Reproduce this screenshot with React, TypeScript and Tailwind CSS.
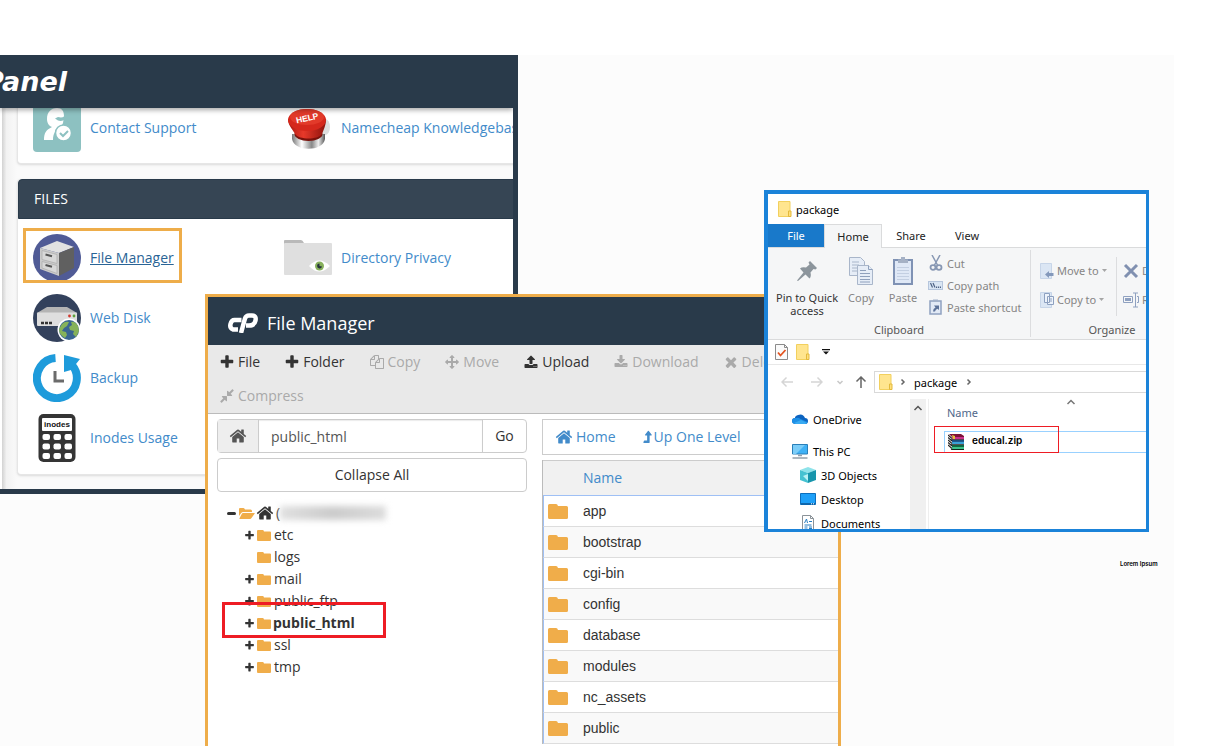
import React from "react";

const FA = {
  home: "M1472 992v480q0 26-19 45t-45 19h-384v-384h-256v384h-384q-26 0-45-19t-19-45v-480q0-1 .5-3t.5-3l575-474 575 474q1 2 1 6zm223-69l-62 74q-8 9-21 11h-3q-13 0-21-7l-692-577-692 577q-12 8-24 7-13-2-21-11l-62-74q-8-10-7-23.5t11-21.5l719-599q32-26 76-26t76 26l244 204v-195q0-14 9-23t23-9h192q14 0 23 9t9 23v408l219 182q10 8 11 21.5t-7 23.5z",
  plus: "M1600 736v192q0 40-28 68t-68 28h-416v416q0 40-28 68t-68 28h-192q-40 0-68-28t-28-68v-416h-416q-40 0-68-28t-28-68v-192q0-40 28-68t68-28h416v-416q0-40 28-68t68-28h192q40 0 68 28t28 68v416h416q40 0 68 28t28 68z",
  copy: "M1696 384q40 0 68 28t28 68v1216q0 40-28 68t-68 28h-960q-40 0-68-28t-28-68v-288h-544q-40 0-68-28t-28-68v-672q0-40 20-88t48-76l408-408q28-28 76-48t88-20h416q40 0 68 28t28 68v328q68-40 128-40h416zm-544 213l-299 299h299v-299zm-640-384l-299 299h299v-299zm196 647l316-316v-416h-384v416q0 40-28 68t-68 28h-416v640h512v-256q0-40 20-88t48-76zm956 804v-1152h-384v416q0 40-28 68t-68 28h-416v640h896z",
  move: "M1792 896q0 26-19 45l-256 256q-19 19-45 19t-45-19-19-45v-128h-384v384h128q26 0 45 19t19 45-19 45l-256 256q-19 19-45 19t-45-19l-256-256q-19-19-19-45t19-45 45-19h128v-384h-384v128q0 26-19 45t-45 19-45-19l-256-256q-19-19-19-45t19-45l256-256q19-19 45-19t45 19 19 45v128h384v-384h-128q-26 0-45-19t-19-45 19-45l256-256q19-19 45-19t45 19l256 256q19 19 19 45t-19 45-45 19h-128v384h384v-128q0-26 19-45t45-19 45 19l256 256q19 19 19 45z",
  upload: "M1344 1472q0-26-19-45t-45-19-45 19-19 45 19 45 45 19 45-19 19-45zm256 0q0-26-19-45t-45-19-45 19-19 45 19 45 45 19 45-19 19-45zm128-224v320q0 40-28 68t-68 28h-1472q-40 0-68-28t-28-68v-320q0-40 28-68t68-28h427q21 56 70.5 92t110.5 36h256q61 0 110.5-36t70.5-92h427q40 0 68 28t28 68zm-325-648q-17 40-59 40h-256v448q0 26-19 45t-45 19h-256q-26 0-45-19t-19-45v-448h-256q-42 0-59-40-17-39 14-69l448-448q18-19 45-19t45 19l448 448q31 30 14 69z",
  download: "M1344 1344q0-26-19-45t-45-19-45 19-19 45 19 45 45 19 45-19 19-45zm256 0q0-26-19-45t-45-19-45 19-19 45 19 45 45 19 45-19 19-45zm128-224v320q0 40-28 68t-68 28h-1472q-40 0-68-28t-28-68v-320q0-40 28-68t68-28h465l135 136q58 56 136 56t136-56l136-136h464q40 0 68 28t28 68zm-325-569q17 41-14 70l-448 448q-18 19-45 19t-45-19l-448-448q-31-29-14-70 17-39 59-39h256v-448q0-26 19-45t45-19h256q26 0 45 19t19 45v448h256q42 0 59 39z",
  times: "M1490 1322q0 40-28 68l-136 136q-28 28-68 28t-68-28l-294-294-294 294q-28 28-68 28t-68-28l-136-136q-28-28-28-68t28-68l294-294-294-294q-28-28-28-68t28-68l136-136q28-28 68-28t68 28l294 294 294-294q28-28 68-28t68 28l136 136q28 28 28 68t-28 68l-294 294 294 294q28 28 28 68z",
  compress: "M896 960v448q0 26-19 45t-45 19-45-19l-144-144-332 332q-10 10-23 10t-23-10l-114-114q-10-10-10-23t10-23l332-332-144-144q-19-19-19-45t19-45 45-19h448q26 0 45 19t19 45zm755-672q0 13-10 23l-332 332 144 144q19 19 19 45t-19 45-45 19h-448q-26 0-45-19t-19-45v-448q0-26 19-45t45-19 45 19l144 144 332-332q10-10 23-10t23 10l114 114q10 10 10 23z",
  up: "M560 1664h560q112 0 112-112V704h190q50 0 72-46 20-44-12-80L1130 130q-24-30-58-30t-58 30L662 578q-32 36-12 80 22 46 72 46h190v640H560q-20 0-32 18l-110 200q-12 40 24 84 40 18 118 18z",
};

function Fa({ d, className }: { d: string; className: string }) {
  return (
    <svg viewBox="0 0 1792 1792" fill="currentColor" className={"shrink-0 " + className} aria-hidden="true">
      <path d={d} />
    </svg>
  );
}

function FolderShape({ className }: { className: string }) {
  return (
    <svg viewBox="0 0 20 15" preserveAspectRatio="none" className={"shrink-0 text-[#f0ad4a] " + className} aria-hidden="true">
      <path fill="currentColor" d="M1.500 0H8Q9.500 0 10 2H18.500Q20 2 20 3.500V13.500Q20 15 18.500 15H1.500Q0 15 0 13.500V1.500Q0 0 1.500 0Z" />
    </svg>
  );
}

/* ---------- cPanel home icons ---------- */

const SupportIcon = () => (
  <svg viewBox="0 0 48 48" className="size-12 shrink-0">
    <rect width="48" height="48" rx="4" fill="#8dc1c1" />
    <path fill="#fff" d="M14 15C14 8 18 4 24 4c5 0 7 3 7 8l-1 7c-1 3-3 4-5 4-2 4-5 6-5 13h-9c0-7 2-10 8-13-3-1-5-4-5-8z" />
    <path d="M22 14.500l3-1.500q4 1 6-.5v3.500q-3 1.500-6 .5z" fill="#8dc1c1" />
    <circle cx="30.500" cy="29" r="8" fill="#fff" stroke="#8dc1c1" strokeWidth="1.500" />
    <path d="M27 29l3 3 5-5" fill="none" stroke="#8dc1c1" strokeWidth="2" />
  </svg>
);

const HelpIcon = () => (
  <svg viewBox="0 0 48 48" className="size-12 shrink-0">
    <defs>
      <linearGradient id="chrome">
        <stop offset="0" stopColor="#777" />
        <stop offset=".3" stopColor="#fff" />
        <stop offset=".6" stopColor="#888" />
        <stop offset=".8" stopColor="#eee" />
        <stop offset="1" stopColor="#555" />
      </linearGradient>
      <linearGradient id="red">
        <stop offset="0" stopColor="#a81810" />
        <stop offset=".4" stopColor="#e8392a" />
        <stop offset="1" stopColor="#8c120c" />
      </linearGradient>
    </defs>
    <ellipse cx="41" cy="23" rx="5" ry="8" fill="#ddd" />
    <path d="M8 30v5c2 13 31 13 33 0v-5z" fill="url(#chrome)" />
    <ellipse cx="24.500" cy="30" rx="14" ry="7" fill="#7a120c" />
    <path d="M4 15c0 7 6 12 7 15 4 6 23 6 27 0 1-3 4-8 4-15z" fill="url(#red)" />
    <ellipse cx="23" cy="16" rx="19" ry="11" fill="#d5281c" />
    <ellipse cx="23" cy="13" rx="17" ry="8" fill="#e23a2a" />
    <text x="12" y="17" fontFamily="Liberation Sans" fontWeight="700" fontSize="8.500" fill="#fff" transform="rotate(-12 23 15)">HELP</text>
  </svg>
);

const CabinetIcon = () => (
  <svg viewBox="0 0 48 48" className="size-12 shrink-0">
    <circle cx="24" cy="24" r="24" fill="#505b96" />
    <path d="M7 14l17-7 17 6-15 6z" fill="#e2e2e2" />
    <path d="M7 14l19 5v23L7 35z" fill="#cbcbcb" />
    <path d="M26 19l15-6v21L26 42z" fill="#606060" />
    <path d="M9 16.500l15 4v9L9 25.500zM9 27.500l15 4v8L9 34z" fill="#d8d8d8" stroke="#aaa" strokeWidth=".7" />
    <path d="M12.500 20.500l6.500 1.800M12.500 31l6.500 1.800" stroke="#555" strokeWidth="2" />
  </svg>
);

const PrivacyIcon = () => (
  <svg viewBox="0 0 48 48" className="size-12 shrink-0">
    <path d="M0 9V7q0-1 1-1h16q1.500 0 3 3v4H0z" fill="#b9b9b9" />
    <rect y="9" width="48" height="32" rx="1" fill="#dfdfdf" />
    <path d="M25 32q10-11 21 0-11 11-21 0z" fill="#fff" />
    <circle cx="35.500" cy="32" r="4.500" fill="#87b05c" />
    <path d="M35.500 29.500a2.500 2.500 0 1 0 2.500 3l-2.500-.5z" fill="#26323c" />
  </svg>
);

const WebDiskIcon = () => (
  <svg viewBox="0 0 48 48" className="size-12 shrink-0">
    <circle cx="24" cy="24" r="24" fill="#33415c" />
    <path d="M14 13h20l10 6H4z" fill="#b4b4b4" />
    <rect x="4" y="18.500" width="40" height="13.500" rx="1" fill="#dedede" />
    <path d="M8 29h11" stroke="#333" strokeWidth="2.500" strokeDasharray="3 1" />
    <circle cx="36.500" cy="22" r="1.400" fill="#d23a30" />
    <circle cx="41" cy="22" r="1.400" fill="#5fa03a" />
    <circle cx="36" cy="36" r="11.500" fill="#fff" />
    <circle cx="36" cy="36" r="10" fill="#3a6592" />
    <path d="M29 30q3-3 7-2l-2 4-3 2-2 3 4 1 1 3-2 3q-6-3-6-9zM38 28q4-1 7 4l1 5-3 6-3-3 1-3-4-1-1-3 3-2z" fill="#86b259" />
  </svg>
);

const BackupIcon = () => (
  <svg viewBox="0 0 48 48" className="size-12 shrink-0">
    <path d="M22.500 4.100A20 20 0 1 0 39 11" fill="none" stroke="#1e9bdb" strokeWidth="8" />
    <path d="M31 1l16 4-4 5-2 1-3 5-7 2z" fill="#1e9bdb" />
    <path d="M22 17v10h9" fill="none" stroke="#6b6b6b" strokeWidth="3" />
  </svg>
);

const InodesIcon = () => (
  <svg viewBox="0 0 48 48" className="size-12 shrink-0">
    <rect x="5.500" width="37" height="48" rx="5" fill="#353535" />
    <rect x="9" y="4" width="30" height="13" rx="1" fill="#fff" />
    <text x="24" y="13" textAnchor="middle" fontFamily="Liberation Sans" fontWeight="700" fontSize="8" fill="#111">inodes</text>
    {[20, 29.500, 39].map((y) =>
      [9.500, 20.500, 31.500].map((x) => <rect key={x + "-" + y} x={x} y={y} width="7.500" height="6" rx="2" fill="#fff" />)
    )}
  </svg>
);

function Feature({ icon, label, active }: { icon: React.ReactNode; label: string; active?: boolean }) {
  return (
    <a
      href="#"
      className={"flex h-12 items-center gap-[9px] whitespace-nowrap text-sm " + (active ? "text-[#2a6496]" : "text-[#428bca]")}
    >
      {icon}
      <span className={active ? "underline" : ""}>{label}</span>
    </a>
  );
}

function CPanelWindow() {
  return (
    <section className="absolute left-0 top-[55px] flex h-[439px] w-[518px] flex-col overflow-hidden border-b-5 border-r-5 border-[#293a4a] bg-[#fafafa] font-['Open_Sans',sans-serif]">
      <header className="relative z-10 flex h-[53px] shrink-0 items-center bg-[#293a4a] shadow-[0_2px_5px_rgba(0,0,0,0.35)]">
        <span className="-ml-4 font-['DejaVu_Sans',sans-serif] text-[27px] font-bold italic leading-none text-white">Panel</span>
      </header>
      <div className="flex min-h-0 flex-1">
        <div className="h-full w-[17px] shrink-0 border-l-2 border-white bg-linear-to-r from-[#d2d2d2] via-[#f2f2f2] via-30% to-[#fafafa]" />
        <div className="flex flex-1 flex-col gap-[15px]">
          <div className="-mt-5 grid shrink-0 grid-cols-[251px_1fr] rounded-b border border-t-0 border-[#e6e6e6] bg-white px-[15px] pb-[11px] pt-4 shadow-sm">
            <Feature icon={<SupportIcon />} label="Contact Support" />
            <Feature icon={<HelpIcon />} label="Namecheap Knowledgebase" />
          </div>
          <div className="shrink-0 rounded border border-t-0 border-[#e6e6e6] bg-white shadow-sm">
            <h2 className="flex h-10 items-center rounded-t border border-[#293a4a] bg-[#364554] px-[15px] text-sm text-white">FILES</h2>
            <div className="grid grid-cols-[251px_1fr] gap-y-3 px-[15px] pb-3 pt-[15px]">
              <Feature icon={<CabinetIcon />} label="File Manager" active />
              <Feature icon={<PrivacyIcon />} label="Directory Privacy" />
              <div className="col-span-2"><Feature icon={<WebDiskIcon />} label="Web Disk" /></div>
              <div className="col-span-2"><Feature icon={<BackupIcon />} label="Backup" /></div>
              <div className="col-span-2"><Feature icon={<InodesIcon />} label="Inodes Usage" /></div>
            </div>
          </div>
        </div>
      </div>
      <div className="pointer-events-none absolute left-[23px] top-[173px] h-[55px] w-[159px] border-3 border-[#eead4a]" />
    </section>
  );
}

/* ---------- File Manager ---------- */

const tools: { label: string; icon: string; size: string; on?: boolean }[] = [
  { label: "File", icon: FA.plus, size: "-mx-px size-4", on: true },
  { label: "Folder", icon: FA.plus, size: "-mx-px size-4", on: true },
  { label: "Copy", icon: FA.copy, size: "size-[14px]" },
  { label: "Move", icon: FA.move, size: "size-[14px]" },
  { label: "Upload", icon: FA.upload, size: "size-[14px]", on: true },
  { label: "Download", icon: FA.download, size: "size-[14px]" },
  { label: "Delete", icon: FA.times, size: "-mx-px size-4" },
  { label: "Compress", icon: FA.compress, size: "-mx-px size-4" },
];

const tree = [
  { name: "etc", plus: true },
  { name: "logs", plus: false },
  { name: "mail", plus: true },
  { name: "public_ftp", plus: true },
  { name: "public_html", plus: true, bold: true },
  { name: "ssl", plus: true },
  { name: "tmp", plus: true },
];

const files = ["app", "bootstrap", "cgi-bin", "config", "database", "modules", "nc_assets", "public"];

function FileManagerWindow() {
  return (
    <section className="absolute bottom-0 left-[205px] top-[294px] flex w-[636px] flex-col overflow-hidden border-3 border-b-0 border-[#eead4a] bg-white font-['Open_Sans',sans-serif] text-sm text-[#333]">
      <header className="flex h-12 shrink-0 items-center gap-[9px] bg-[#293a4a] pl-5 pt-1 text-white">
        <svg viewBox="0 0 30 20" className="h-5 w-[30px] shrink-0" fill="none" stroke="#fff" aria-label="cP">
          <path strokeWidth="4.500" d="M13.500 7H6.500Q3.500 7 2.500 11T5 16.500H10" />
          <path strokeWidth="4.500" d="M13 20L17 5.500Q18 2.500 21 2.500H24Q28.500 2.500 27.500 7.500T21 12.500H18" />
        </svg>
        <h1 className="text-lg leading-6">File Manager</h1>
      </header>
      <div className="flex h-[69px] shrink-0 flex-wrap content-start gap-x-[25px] border-b border-[#bbb] bg-[#e9e9e9] pl-3">
        {tools.map((t) => (
          <button key={t.label} className={"flex h-[34px] items-center gap-1 " + (t.on ? "text-[#333]" : "text-[#aaa]")}>
            <Fa d={t.icon} className={t.size} />
            {t.label}
          </button>
        ))}
      </div>
      <div className="flex min-h-0 flex-1 gap-[15px] pl-[9px] pt-[5px]">
        <div className="flex w-[310px] shrink-0 flex-col">
          <div className="flex h-[34px] rounded-sm border border-[#ccc]">
            <button aria-label="Home directory" className="flex w-[41px] items-center justify-center border-r border-[#ccc] bg-[#eee] text-[#555]">
              <Fa d={FA.home} className="size-[18px]" />
            </button>
            <input aria-label="Path" defaultValue="public_html" className="min-w-0 flex-1 px-3 pt-px text-[#555] shadow-[inset_0_1px_1px_rgba(0,0,0,0.08)] outline-none" />
            <button className="w-11 border-l border-[#ccc]">Go</button>
          </div>
          <button className="mt-[5px] h-[34px] rounded-sm border border-[#ccc]">Collapse All</button>
          <div className="relative mt-[10px] leading-[22px]">
            <div className="flex h-[22px] items-center pl-[10px]">
              <span className="h-[3px] w-[9px] rounded-xs bg-[#333]" />
              <svg viewBox="0 0 16 11" className="ml-[3px] h-[11px] w-4 text-[#f0ad4a]" fill="currentColor">
                <path d="M0 1Q0 0 1 0H4.500Q5.500 0 6 1.500H11.500Q13 1.500 13 3V4H4Q3 4 2 5.200L0 8z" />
                <path d="M4 5H15.500Q16 5 15.600 5.700L12.500 10Q12 11 11 11H.8Q.2 11 .5 10.300L3 5.600Q3.400 5 4 5z" />
              </svg>
              <Fa d={FA.home} className="ml-px size-[18px]" />
              <span className="ml-[2px]">(</span>
              <span className="h-[14px] w-[106px] bg-linear-to-r from-[#e0e0e0] via-[#cbcbcb] to-[#dcdcdc] blur-[3px]" />
            </div>
            {tree.map((n) => (
              <div key={n.name} className="flex h-[22px] items-center pl-[27px]">
                <Fa d={FA.plus} className={"size-[11px] " + (n.plus ? "" : "invisible")} />
                <FolderShape className="ml-[2px] h-[11px] w-[14px]" />
                <span className={n.bold ? "ml-[2px] font-bold" : "ml-[3px]"}>{n.name}</span>
              </div>
            ))}
            <div className="pointer-events-none absolute left-[5px] top-[100px] h-9 w-[164px] border-3 border-[#ee1c24]" />
          </div>
        </div>
        <div className="flex min-w-0 flex-1 flex-col">
          <nav className="flex h-9 shrink-0 items-center gap-6 border border-r-0 border-[#ccc] pl-3 text-[#428bca]">
            <a href="#" className="flex items-center gap-[3px]">
              <Fa d={FA.home} className="size-[18px]" />
              Home
            </a>
            <a href="#" className="flex items-center">
              <Fa d={FA.up} className="size-[14px]" />
              Up One Level
            </a>
          </nav>
          <table className="mt-[5px] w-full border-separate border-spacing-0 border-l border-[#bbb]">
            <thead>
              <tr>
                <th scope="col" className="h-9 border-b border-t border-b-[#9fc0f5] border-t-[#ccc] bg-[#f1f1f1] p-0 pl-10 text-left font-normal text-[#428bca]">Name</th>
              </tr>
            </thead>
            <tbody className="font-['Liberation_Sans',Arial,sans-serif]">
              {files.map((f) => (
                <tr key={f} className="bg-white even:bg-[#f9f9f9]">
                  <td className="h-[31px] border-b border-l border-b-[#ddd] border-l-[#9fc0f5] p-0 pl-1">
                    <div className="flex items-center gap-[15px]">
                      <FolderShape className="h-[15px] w-5" />
                      {f}
                    </div>
                  </td>
                </tr>
              ))}
            </tbody>
          </table>
        </div>
      </div>
    </section>
  );
}

/* ---------- Explorer ---------- */

const YellowFolder = () => (
  <svg viewBox="0 0 14 16" className="h-4 w-[14px] shrink-0">
    <path d="M.5.500h11.500v15H.5z" fill="#ffe58f" stroke="#f2d05e" />
    <path d="M10.500 10h2.500v5.500h-2.500z" fill="#ffe07c" stroke="#e3b93c" />
  </svg>
);

const PinIcon = () => (
  <svg viewBox="0 0 22 28" className="h-7 w-[22px]">
    <path d="M14 4l7 7-1.500 1.500-2-.5-3 3.500q1 4-1 6l-4-4L2 24l-1-.5 6.500-8-3.500-4q2-2 6-1L13.500 7.500 12.500 5.500z" fill="#8c959c" />
  </svg>
);

const CopyBig = () => (
  <svg viewBox="0 0 24 28" className="h-7 w-6" stroke="#a9b6ca" fill="#e6edf7">
    <path d="M.5.500h11l4 4v14H.5z" />
    <path d="M3 5h7M3 8h7M3 11h6M3 14h5" />
    <path d="M8.500 8.500h11l4 4v15h-15z" />
    <path d="M19.500 8.500v4h4M11 13.500h6M11 16.500h10M11 19.500h10M11 22.500h10M11 25h10" stroke="#8fa0bc" />
  </svg>
);

const PasteBig = () => (
  <svg viewBox="0 0 20 28" className="h-7 w-5">
    <rect x="1" y="3" width="18" height="24" fill="#dfe8f6" stroke="#7f92b4" strokeWidth="2" />
    <path d="M5 2.500h3V0h4v2.500h3V6H5z" fill="#a5b1c5" />
    <path d="M4 10.500h12M4 13.500h12M4 16.500h12M4 19.500h12M4 22.500h12" stroke="#c3cfe2" />
  </svg>
);

const CutIcon = () => (
  <svg viewBox="0 0 16 16" className="size-4" fill="none" stroke="#8797b3">
    <path d="M4 0l6 11M12 0L6 11" strokeWidth="1.500" />
    <ellipse cx="5" cy="12.500" rx="2.500" ry="2.300" strokeWidth="1.800" />
    <ellipse cx="11" cy="12.500" rx="2.500" ry="2.300" strokeWidth="1.800" />
  </svg>
);

const PathIcon = () => (
  <svg viewBox="0 0 16 16" className="size-4" fill="none">
    <rect x=".5" y="4.500" width="14" height="8" fill="#d9e5f3" stroke="#b5c5dc" />
    <path d="M2.500 6l2 4.500M5 6l2 4.500" stroke="#4e6285" strokeWidth="1.200" />
    <path d="M8 10.300h5" stroke="#4e6285" strokeWidth="1.400" strokeDasharray="1.200 .8" />
  </svg>
);

const ShortcutIcon = () => (
  <svg viewBox="0 0 16 16" className="size-4" fill="none">
    <rect x="2" y="2" width="11" height="13" fill="#e2eaf6" stroke="#8fa1c0" strokeWidth="1.500" />
    <path d="M5 .5h5V3H5z" fill="#a3b2ca" />
    <path d="M5 12.500q0-3 2.500-4L6 6.500h5V11L9.500 9.800Q7.500 10.500 7 12.500z" fill="#5c7299" />
  </svg>
);

const MoveToIcon = ({ copy }: { copy?: boolean }) => (
  <svg viewBox="0 0 14 16" className="h-4 w-[14px]" fill="none">
    <path d="M.5.500h11v15H.5z" fill="#dbe6f4" stroke="#c7d5e8" />
    {copy ? (
      <path d="M4.500 1.500h5v9h-5zM7.500 4.500h6v8h-6zM9 7h3M9 9h3" fill="#edf3fb" stroke="#8da0c0" />
    ) : (
      <path d="M5 11.500L9 8v2h4.500v3H9v2z" fill="#8499bb" />
    )}
  </svg>
);

const RenameIcon = () => (
  <svg viewBox="0 0 16 16" className="size-4 shrink-0" fill="none" stroke="#8fa1c0">
    <path d="M.5 4.500h9v6h-9zM14 4.500h1.500v6H14M10 1h5M10 15h5M12.500 1v14" />
    <path d="M2 7.500h6" strokeWidth="3" />
  </svg>
);

const CloudIcon = () => (
  <svg viewBox="0 0 16 16" className="size-4 shrink-0">
    <path d="M3 9q-1-4 3-5 5-2 7 3 3 0 3 3t-3 3H4Q0 13 0 10t3-3z" fill="#0c63c0" />
    <path d="M3.500 7q3-1 5 1l7 3q0 2-2.500 2H4q-4 0-4-3t3.500-3z" fill="#1d8fe6" />
    <path d="M2 12l7-3 6 3-2 1H4z" fill="#39aaf2" />
  </svg>
);

const PcIcon = () => (
  <svg viewBox="0 0 16 16" className="size-4 shrink-0">
    <path d="M.5 1.500h15v9.500H.5z" fill="#3fb1f5" stroke="#2a7fb8" />
    <path d="M1 2h12L4 11H1z" fill="#7ccdf8" />
    <path d="M6 12.500h4M.5 15h15" stroke="#93a0ab" strokeWidth="1.300" />
  </svg>
);

const CubeIcon = () => (
  <svg viewBox="0 0 16 16" className="size-4 shrink-0">
    <path d="M0 3l8-3 8 3-8 3z" fill="#8ee3ea" />
    <path d="M0 3l8 3v10l-8-3z" fill="#45c2d1" />
    <path d="M16 3L8 6v10l8-3z" fill="#1795ac" />
    <path d="M3 9l5-2v7z" fill="#b8f1f4" />
  </svg>
);

const DesktopIcon = () => (
  <svg viewBox="0 0 16 16" className="size-4 shrink-0">
    <path d="M.5 2.500h15v11H.5z" fill="#1ea0f8" stroke="#0c6fbd" />
    <path d="M1 12.800h14" stroke="#0b4f8a" />
    <path d="M11 12.800h3" stroke="#fff" strokeDasharray="1 1" />
  </svg>
);

const DocIcon = () => (
  <svg viewBox="0 0 16 16" className="size-4 shrink-0" fill="none">
    <path d="M2.500.500h8l3 3v12h-11z" fill="#fff" stroke="#8b9298" />
    <path d="M10.500.500v3h3" stroke="#8b9298" />
    <path d="M4.500 8l2-4 1 4M9 6.500h3M4.500 10h7M4.500 12h3M9 12h3M4.500 14h3M9 13.500h3" stroke="#2b7fc0" />
  </svg>
);

const ZipIcon = () => (
  <svg viewBox="0 0 16 16" className="size-4 shrink-0">
    <path d="M1 0h12l3 2v3H3L0 3z" fill="#7d1238" />
    <path d="M3 3h13v2.500H3z" fill="#c9308c" />
    <path d="M2 6h14v4H3z" fill="#1f5a8f" />
    <path d="M3 8h13v2H3z" fill="#3aa2d8" />
    <path d="M2 11h14v5H3z" fill="#126b43" />
    <path d="M3 13h13v2H3z" fill="#3cc38a" />
    <path d="M0 0h1l3 3v13L0 12z" fill="#fff" />
    <path d="M0 1l4 3.500M0 3.500L4 7M0 6l4 3.500M0 8.500L4 12M0 11l4 3.500" stroke="#222" strokeWidth="1.100" />
    <path d="M3 5.700h13M3 10.600h13M3 15.600h13" stroke="#111" strokeWidth=".8" />
    <path d="M4 1l3 1v3h-2z" fill="#e6c23a" />
  </svg>
);

const Chevron = ({ d, className }: { d: string; className: string }) => (
  <svg viewBox="0 0 12 12" className={"size-3 shrink-0 " + className} fill="none" stroke="currentColor" strokeWidth="1.500">
    <path d={d} />
  </svg>
);

const Caret = () => (
  <svg viewBox="0 0 5 3" className="h-[3px] w-[5px]"><path d="M0 0h5L2.500 3z" fill="#a5a5a5" /></svg>
);

const places = [
  { name: "3D Objects", icon: <CubeIcon /> },
  { name: "Desktop", icon: <DesktopIcon /> },
  { name: "Documents", icon: <DocIcon /> },
];

function ExplorerWindow() {
  return (
    <section className="absolute left-[764px] top-[190px] flex h-[342px] w-[385px] flex-col overflow-hidden whitespace-nowrap border-b-3 border-l-4 border-r-3 border-t-4 border-[#1b83d9] bg-white font-['Noto_Sans',sans-serif] text-[11px] leading-[13px] text-[#222]">
      <div className="flex h-[30px] shrink-0 items-center gap-1 pl-[10px] text-black">
        <YellowFolder />
        package
      </div>
      <div role="tablist" className="flex h-6 shrink-0 border-b border-[#dadbdc]">
        <button role="tab" className="w-14 bg-[#1979ca] text-white">File</button>
        <button role="tab" aria-selected="true" className="-mb-px w-[58px] border border-b-0 border-[#dadbdc] bg-[#f5f6f7]">Home</button>
        <button role="tab" className="w-[58px]">Share</button>
        <button role="tab" className="w-[54px]">View</button>
      </div>
      <div className="flex h-[92px] shrink-0 border-b border-[#dadbdc] bg-[#f5f6f7] text-[#858585]">
        <div className="my-[2px] flex w-[263px] shrink-0 flex-col border-r border-[#dcdddf]">
          <div className="flex flex-1">
            <button className="flex w-[78px] flex-col items-center pt-[7px] text-[#333]">
              <PinIcon />
              <span className="mt-[6px]">Pin to Quick<br />access</span>
            </button>
            <button className="flex w-[30px] flex-col items-center pt-[7px]">
              <CopyBig />
              <span className="mt-[6px]">Copy</span>
            </button>
            <button className="ml-3 flex w-[30px] flex-col items-center pt-[7px]">
              <PasteBig />
              <span className="mt-[6px]">Paste</span>
            </button>
            <div className="ml-[10px] flex flex-col pt-[2px]">
              <button className="flex h-[22px] items-center gap-[3px]"><CutIcon />Cut</button>
              <button className="flex h-[22px] items-center gap-[3px]"><PathIcon />Copy path</button>
              <button className="flex h-[22px] items-center gap-[3px]"><ShortcutIcon />Paste shortcut</button>
            </div>
          </div>
          <div className="h-[14px] text-center text-[#555]">Clipboard</div>
        </div>
        <div className="my-[2px] flex w-[162px] shrink-0 flex-col pl-[9px]">
          <div className="flex flex-1">
            <div className="flex w-[76px] flex-col pt-[6px]">
              <button className="flex h-[29px] items-center gap-[3px]"><MoveToIcon />Move to<Caret /></button>
              <button className="flex h-[29px] items-center gap-[3px]"><MoveToIcon copy />Copy to<Caret /></button>
            </div>
            <div className="my-[7px] w-px bg-[#dcdddf]" />
            <div className="flex flex-col pl-[6px] pt-[6px]">
              <button className="flex h-[29px] items-center gap-[3px]">
                <svg viewBox="0 0 16 16" className="size-4 shrink-0"><path d="M2 2l12 12M14 2L2 14" stroke="#8090b0" strokeWidth="3" /></svg>
                Delete
              </button>
              <button className="flex h-[29px] items-center gap-[3px]"><RenameIcon />Rename</button>
            </div>
          </div>
          <div className="h-[14px] pr-[9px] text-center text-[#555]">Organize</div>
        </div>
      </div>
      <div className="flex h-[25px] shrink-0 items-center gap-2 border-b border-[#e8e8e8] pl-[7px]">
        <svg viewBox="0 0 13 16" className="h-4 w-[13px]" fill="none">
          <path d="M.5.500h9l3 3v12H.5z" fill="#fafafa" stroke="#8b8b8b" />
          <path d="M9.500.500v3h3" stroke="#8b8b8b" />
          <path d="M3 8.500l2.500 3 5-5.500" stroke="#e3531f" strokeWidth="1.800" />
        </svg>
        <YellowFolder />
        <svg viewBox="0 0 8 6" className="ml-1 h-[6px] w-2"><path d="M0 0h8v1.200H0zM1 2.500h6L4 5.500z" fill="#111" /></svg>
      </div>
      <div className="flex h-[34px] shrink-0 items-center pl-[13px]">
        <Chevron d="M12 6H1M5.500 1.500L1 6l4.500 4.500" className="text-[#d5d5d5]" />
        <Chevron d="M0 6h11M6.500 1.500L11 6l-4.500 4.500" className="ml-[18px] text-[#d5d5d5]" />
        <Chevron d="M3.500 5L6 7.500 8.500 5" className="ml-[11px] text-[#c8c8c8]" />
        <Chevron d="M6 12V1M1.500 5.500L6 1l4.500 4.500" className="ml-[9px] text-[#666]" />
        <div className="ml-[7px] flex h-[22px] flex-1 items-center border border-r-0 border-[#d9d9d9] pl-1 text-black">
          <YellowFolder />
          <Chevron d="M4.500 3.500L7 6 4.500 8.500" className="ml-1 text-[#666]" />
          <span className="ml-[5px]">package</span>
          <Chevron d="M4.500 3.500L7 6 4.500 8.500" className="ml-[6px] text-[#666]" />
        </div>
      </div>
      <div className="flex min-h-0 flex-1">
        <ul className="w-[142px] shrink-0 pt-2 text-black">
          <li className="flex h-6 items-center gap-[5px] pl-6"><CloudIcon />OneDrive</li>
          <li className="mt-2 flex h-6 items-center gap-[5px] pl-6"><PcIcon />This PC</li>
          {places.map((p) => (
            <li key={p.name} className="flex h-6 items-center gap-[5px] pl-8">{p.icon}{p.name}</li>
          ))}
        </ul>
        <div className="flex w-4 shrink-0 justify-center bg-[#f0f0f0] pt-[3px]">
          <Chevron d="M2.500 8L6 4.500 9.500 8" className="text-[#555]" />
        </div>
        <div className="ml-[2px] flex flex-1 flex-col border-l border-[#eee]">
          <div className="relative flex h-8 items-center pb-[6px] pl-[18px] text-[#50688a]">
            Name
            <Chevron d="M2.500 6L6 2.500 9.500 6" className="absolute -top-px left-[136px] text-[#777]" />
          </div>
          <div className="relative ml-[15px] flex h-[22px] items-center gap-2 border border-r-0 border-[#99d1ff] pl-[3px]">
            <ZipIcon />
            <span className="pb-[3px] font-['Inter',sans-serif] text-[10px] font-semibold text-black">educal.zip</span>
            <div className="pointer-events-none absolute -left-[11px] -top-[6px] h-[27px] w-[125px] border border-[#ee1c24]" />
          </div>
        </div>
      </div>
    </section>
  );
}

export default function App() {
  return (
    <main className="relative flex min-h-screen flex-col overflow-hidden bg-white pt-[55px]">
      <div className="mr-12 flex-1 bg-[#fcfcfc]" />
      <CPanelWindow />
      <FileManagerWindow />
      <ExplorerWindow />
      <p className="absolute left-[1120px] top-[560px] whitespace-nowrap font-['Inter',sans-serif] text-[6px] font-semibold leading-2 text-black">Lorem Ipsum</p>
    </main>
  );
}
